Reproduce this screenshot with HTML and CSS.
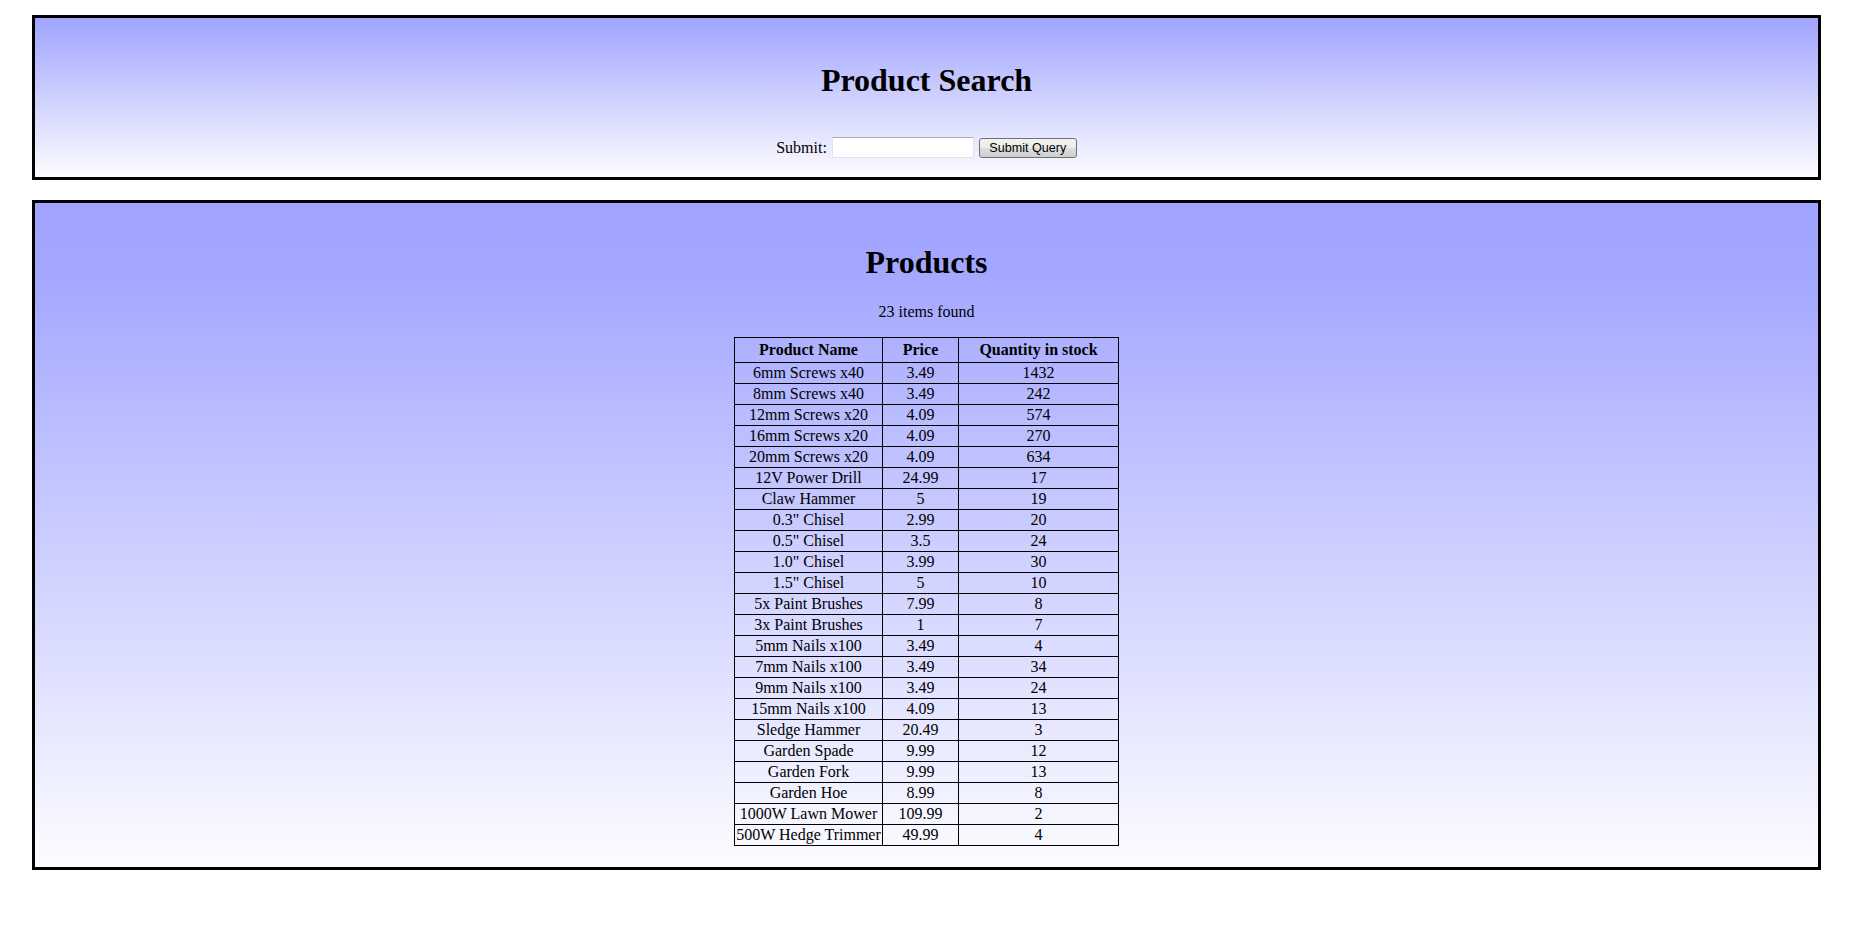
FILE: index.html
```html
<!DOCTYPE html>
<html>
<head>
<meta charset="utf-8">
<title>Product Search</title>
<link rel="stylesheet" href="styles.css">
</head>
<body>
<div class="page">
  <section class="panel panel-search">
    <h1 class="title title-search">Product Search</h1>
    <form class="search-form">
      <label class="search-label" for="q">Submit:</label>
      <input class="search-input" id="q" type="text">
      <button class="search-button" type="button">Submit Query</button>
    </form>
  </section>
  <section class="panel panel-products">
    <h1 class="title title-products">Products</h1>
    <p class="count">23 items found</p>
    <table class="products">
      <colgroup>
        <col class="col-name">
        <col class="col-price">
        <col class="col-qty">
      </colgroup>
      <thead>
        <tr><th>Product Name</th><th>Price</th><th>Quantity in stock</th></tr>
      </thead>
      <tbody>
        <tr><td>6mm Screws x40</td><td>3.49</td><td>1432</td></tr>
        <tr><td>8mm Screws x40</td><td>3.49</td><td>242</td></tr>
        <tr><td>12mm Screws x20</td><td>4.09</td><td>574</td></tr>
        <tr><td>16mm Screws x20</td><td>4.09</td><td>270</td></tr>
        <tr><td>20mm Screws x20</td><td>4.09</td><td>634</td></tr>
        <tr><td>12V Power Drill</td><td>24.99</td><td>17</td></tr>
        <tr><td>Claw Hammer</td><td>5</td><td>19</td></tr>
        <tr><td>0.3" Chisel</td><td>2.99</td><td>20</td></tr>
        <tr><td>0.5" Chisel</td><td>3.5</td><td>24</td></tr>
        <tr><td>1.0" Chisel</td><td>3.99</td><td>30</td></tr>
        <tr><td>1.5" Chisel</td><td>5</td><td>10</td></tr>
        <tr><td>5x Paint Brushes</td><td>7.99</td><td>8</td></tr>
        <tr><td>3x Paint Brushes</td><td>1</td><td>7</td></tr>
        <tr><td>5mm Nails x100</td><td>3.49</td><td>4</td></tr>
        <tr><td>7mm Nails x100</td><td>3.49</td><td>34</td></tr>
        <tr><td>9mm Nails x100</td><td>3.49</td><td>24</td></tr>
        <tr><td>15mm Nails x100</td><td>4.09</td><td>13</td></tr>
        <tr><td>Sledge Hammer</td><td>20.49</td><td>3</td></tr>
        <tr><td>Garden Spade</td><td>9.99</td><td>12</td></tr>
        <tr><td>Garden Fork</td><td>9.99</td><td>13</td></tr>
        <tr><td>Garden Hoe</td><td>8.99</td><td>8</td></tr>
        <tr><td>1000W Lawn Mower</td><td>109.99</td><td>2</td></tr>
        <tr><td>500W Hedge Trimmer</td><td>49.99</td><td>4</td></tr>
      </tbody>
    </table>
  </section>
</div>
</body>
</html>
```
FILE: styles.css
```css
html, body {
  margin: 0;
  padding: 0;
  background: #ffffff;
}

body {
  font-family: "Liberation Serif", "Times New Roman", serif;
  font-size: 16px;
  color: #000000;
}

.page {
  padding: 15px 49px 0 32px;
  display: flex;
  flex-direction: column;
  gap: 20px;
}

.panel {
  border: 3px solid #000000;
  background: linear-gradient(to bottom, #a0a4ff 0%, #fcfcff 100%);
  display: flex;
  flex-direction: column;
  align-items: center;
}

.panel-search {
  height: 159px;
}

.panel-products {
  height: 664px;
  background: linear-gradient(to bottom, #a0a4ff 0%, #a3a7ff 10%, #fcfcff 100%);
}

.title {
  margin: 0;
  font-size: 32px;
  font-weight: bold;
  line-height: 36px;
}

.title-search {
  margin-top: 44px;
}

.title-products {
  margin-top: 41px;
}

.search-form {
  margin-top: 39px;
  display: flex;
  align-items: center;
  gap: 5px;
  height: 21px;
}

.search-label {
  line-height: 18px;
}

.search-input {
  box-sizing: border-box;
  width: 142px;
  height: 21px;
  margin: 0;
  padding: 1px 2px;
  border: 1px solid #e2e3ea;
  border-top-color: #abadb3;
  background: #ffffff;
  font-family: "Liberation Sans", Arial, sans-serif;
  font-size: 13px;
}

.search-button {
  box-sizing: border-box;
  width: 98px;
  height: 20px;
  margin: 0;
  padding: 0 6px;
  border: 1px solid #707070;
  border-radius: 3px;
  background: linear-gradient(to bottom, #f2f2f2 0%, #ebebeb 50%, #dddddd 51%, #cfcfcf 100%);
  font-family: "Liberation Sans", Arial, sans-serif;
  font-size: 12.6px;
  line-height: 16px;
  color: #000000;
}

.count {
  margin: 23px 0 0 0;
  line-height: 18px;
}

.products {
  margin-top: 16px;
  border-collapse: collapse;
  table-layout: fixed;
  width: 384px;
  border: 1px solid #000000;
}

.col-name { width: 148px; }
.col-price { width: 76px; }
.col-qty { width: 160px; }

.products th,
.products td {
  border: 1px solid #000000;
  text-align: center;
  line-height: 18px;
  padding: 1px 1px;
  white-space: nowrap;
  overflow: visible;
}

.products th {
  padding: 3px 1px;
  font-weight: bold;
}
```
